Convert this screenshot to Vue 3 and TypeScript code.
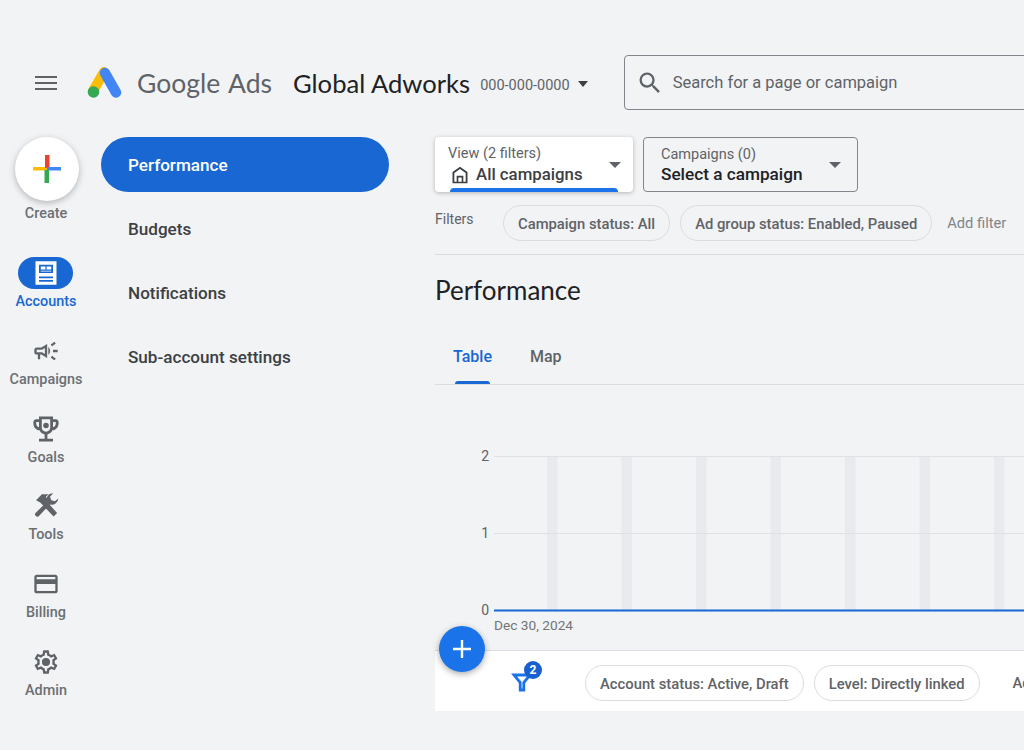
<script setup lang="ts">
const railItems = [
  { label: 'Campaigns', box: '0 0 24 24', icon: 'M18 11v2h4v-2h-4zm-2 6.61c.96.71 2.21 1.65 3.2 2.39.4-.53.8-1.07 1.2-1.6-.99-.74-2.24-1.68-3.2-2.4-.4.54-.8 1.08-1.2 1.61zM20.4 5.6c-.4-.53-.8-1.07-1.2-1.6-.99.74-2.24 1.68-3.2 2.4.4.53.8 1.07 1.2 1.6.96-.72 2.21-1.65 3.2-2.4zM4 9c-1.1 0-2 .9-2 2v2c0 1.1.9 2 2 2h1v4h2v-4h1l5 3V6L8 9H4zm5.03 1.71L11 9.53v4.94l-1.97-1.18-.48-.29H4v-2h4.550l.48-.29zM15.500 12c0-1.330-.58-2.530-1.500-3.350v6.690c.92-.81 1.500-2.010 1.500-3.340z' },
  { label: 'Goals', box: '2 2 20 20', icon: 'M19 5h-2V3H7v2H5c-1.1 0-2 .9-2 2v1c0 2.55 1.92 4.63 4.39 4.94.63 1.5 1.98 2.63 3.61 2.96V19H7v2h10v-2h-4v-3.1c1.63-.33 2.98-1.46 3.61-2.96C19.08 12.63 21 10.55 21 8V7c0-1.1-.9-2-2-2zM5 8V7h2v3.82C5.84 10.4 5 9.3 5 8zm10 3c0 1.65-1.35 3-3 3s-3-1.35-3-3V5h6v6zm4-3c0 1.3-.84 2.4-2 2.82V7h2v1zM12 7.5a2 2 0 1 0 0 4 2 2 0 0 0 0-4z' },
  { label: 'Tools', box: '0 0 24 24', icon: 'M3.500 7 8.500 2H14l-2.200 2.200L14 6.500 12.500 8 21.500 18l-3 3L8.500 10.500 7 9zM22.500 5.500a5.500 5.500 0 0 1-7.200 5.200L6 20.500a1.900 1.900 0 0 1-2.800-2.700l9.700-9.400A5.500 5.500 0 0 1 18.200 1L15.400 4l1.200 3 3 1z' },
  { label: 'Billing', box: '0 0 24 24', icon: 'M20 4H4c-1.11 0-1.99.89-1.99 2L2 18c0 1.11.89 2 2 2h16c1.11 0 2-.89 2-2V6c0-1.11-.89-2-2-2zm0 14H4v-6h16v6zm0-10H4V6h16v2z' },
  { label: 'Admin', box: '0 0 24 24', icon: 'M19.43 12.98c.04-.32.07-.64.07-.98s-.03-.66-.07-.98l2.11-1.65c.19-.15.24-.42.12-.64l-2-3.46c-.12-.22-.39-.3-.61-.22l-2.49 1c-.52-.4-1.08-.73-1.69-.98l-.38-2.65C14.46 2.18 14.25 2 14 2h-4c-.25 0-.46.18-.49.42l-.38 2.65c-.61.25-1.17.59-1.69.98l-2.49-1c-.23-.09-.49 0-.61.22l-2 3.46c-.13.22-.07.49.12.64l2.11 1.65c-.04.32-.07.65-.07.98s.03.66.07.98l-2.11 1.65c-.19.15-.24.42-.12.64l2 3.46c.12.22.39.3.61.22l2.49-1c.52.4 1.08.73 1.69.98l.38 2.65c.03.24.24.42.49.42h4c.25 0 .46-.18.49-.42l.38-2.65c.61-.25 1.17-.59 1.69-.98l2.49 1c.23.09.49 0 .61-.22l2-3.46c.12-.22.07-.49-.12-.64l-2.11-1.65zM17.45 11.27c.04.31.05.52.05.73s-.02.43-.05.73l-.14 1.13.89.7 1.08.84-.7 1.21-1.27-.51-1.04-.42-.9.68c-.43.32-.84.56-1.25.73l-1.06.43-.16 1.13-.2 1.35h-1.4l-.19-1.35-.16-1.13-1.06-.43c-.43-.18-.83-.41-1.23-.71l-.91-.7-1.06.43-1.27.51-.7-1.21 1.08-.84.89-.7-.14-1.13c-.03-.31-.05-.54-.05-.74s.02-.43.05-.73l.14-1.13-.89-.7-1.08-.84.7-1.21 1.27.51 1.04.42.9-.68c.43-.32.84-.56 1.25-.73l1.06-.43.16-1.13.2-1.35h1.39l.19 1.35.16 1.13 1.06.43c.43.18.83.41 1.23.71l.91.7 1.06-.43 1.27-.51.7 1.21-1.07.85-.89.7.14 1.13zM12 8.5a3.5 3.5 0 1 0 0 7 3.5 3.5 0 0 0 0-7z' },
]
const navItems = ['Budgets', 'Notifications', 'Sub-account settings']
const bars = Array.from({ length: 8 }, (_, i) => 112 + i * 74.5)
const gridLines = [
  { y: 72, label: '2' },
  { y: 149, label: '1' },
  { y: 226, label: '0' },
]
</script>

<template>
  <div class="page">
    <header class="topbar">
      <svg class="menu" width="24" height="24" viewBox="0 0 24 24" aria-hidden="true"><path fill="#5f6368" d="M1 5h22v2.100H1zM1 11h22v2.100H1zM1 17h22v2.100H1z" /></svg>
      <svg class="logo" width="36" height="32" viewBox="0 0 36 32" aria-hidden="true">
        <path d="M17 5 6 24" stroke="#fbbc04" stroke-width="10" stroke-linecap="round" fill="none" />
        <path d="M18 6 29 25.500" stroke="#4285f4" stroke-width="10.500" stroke-linecap="round" fill="none" />
        <circle cx="6.500" cy="25" r="5.800" fill="#34a853" />
      </svg>
      <span class="brand"><span>Google</span> <span class="brand-a">Ads</span></span>
      <span class="account">Global Adworks</span>
      <span class="cid">000-000-0000</span>
      <i class="caret small"></i>
      <div class="search">
        <svg width="28" height="28" viewBox="0 0 24 24" aria-hidden="true"><path fill="#5f6368" d="M15.500 14h-.79l-.28-.27A6.470 6.470 0 0 0 16 9.500 6.500 6.500 0 1 0 9.500 16c1.610 0 3.090-.59 4.230-1.570l.27.28v.79l5 4.990L20.490 19l-4.990-5zm-6 0C7.010 14 5 11.990 5 9.500S7.010 5 9.500 5 14 7.010 14 9.500 11.990 14 9.500 14z" /></svg>
        <span>Search for a page or campaign</span>
      </div>
    </header>

    <div class="body">
      <aside class="rail">
        <div class="create-item">
          <div class="create-btn">
            <svg width="28" height="28" viewBox="0 0 28 28" aria-hidden="true">
              <path d="M0 12h14v3.500H0z" fill="#fbbc04" />
              <path d="M12 0h4.500v13H12z" fill="#ea4335" />
              <path d="M14 12h14v3.500H14z" fill="#4285f4" />
              <path d="M11.500 15h4.500v13h-4.500z" fill="#34a853" />
            </svg>
          </div>
          <span class="rail-label">Create</span>
        </div>
        <div class="rail-item accounts">
          <div class="pill">
            <svg width="28" height="28" viewBox="0 0 24 24" aria-hidden="true"><path fill="#fff" fill-rule="evenodd" d="M3 2h18v20H3zM6 5v7h12V5zM6 15v1.500h12V15zM6 18v1.500h12V18zM7.500 6.500h4V9h-4zM12.500 6.500h4V9h-4zM7.500 10h9v.8h-9z" /></svg>
          </div>
          <span class="rail-label">Accounts</span>
        </div>
        <div v-for="item in railItems" :key="item.label" class="rail-item">
          <svg width="28" height="28" :viewBox="item.box" aria-hidden="true"><path fill="#5f6368" :d="item.icon" /></svg>
          <span class="rail-label">{{ item.label }}</span>
        </div>
      </aside>

      <nav class="nav">
        <div class="nav-item active">Performance</div>
        <div v-for="item in navItems" :key="item" class="nav-item">{{ item }}</div>
      </nav>

      <main class="main">
        <div class="selectors">
          <div class="selector view">
            <div class="sel-text">
              <span class="sel-label">View (2 filters)</span>
              <span class="sel-value">
                <svg width="20" height="20" viewBox="0 0 24 24" aria-hidden="true"><path fill="#3c4043" fill-rule="evenodd" d="M12 2 3 8.500V22h18V8.500zM5.200 9.700 12 4.800l6.800 4.900V20H16v-7H8v7H5.200zM10 15h4v5h-4z" /></svg>
                All campaigns
              </span>
            </div>
            <i class="caret"></i>
            <div class="view-bar"></div>
          </div>
          <div class="selector campaigns">
            <div class="sel-text">
              <span class="sel-label">Campaigns (0)</span>
              <span class="sel-value dark">Select a campaign</span>
            </div>
            <i class="caret"></i>
          </div>
        </div>

        <div class="filters">
          <span class="filters-label">Filters</span>
          <span class="chip">Campaign status: All</span>
          <span class="chip">Ad group status: Enabled, Paused</span>
          <span class="add-filter">Add filter</span>
        </div>

        <h1 class="title">Performance</h1>

        <div class="tabs">
          <span class="tab active">Table</span>
          <span class="tab">Map</span>
        </div>

        <div class="chart">
          <svg width="589" height="265" viewBox="0 0 589 265" aria-label="Performance chart">
            <rect v-for="x in bars" :key="x" :x="x" y="71" width="10.500" height="154" fill="#e8eaed" />
            <line v-for="g in gridLines.slice(0, 2)" :key="g.y" x1="59" x2="589" :y1="g.y - 0.5" :y2="g.y - 0.5" stroke="#dfe1e5" />
            <text v-for="g in gridLines" :key="g.label" x="54" :y="g.y + 4" text-anchor="end" class="axis">{{ g.label }}</text>
            <line x1="59" x2="589" y1="225.500" y2="225.500" stroke="#1967d2" stroke-width="2" />
            <text x="59" y="245" class="axis date">Dec 30, 2024</text>
          </svg>
        </div>

        <div class="panel">
          <div class="fab">
            <svg width="24" height="24" viewBox="0 0 24 24" aria-hidden="true"><path fill="#fff" d="M10.800 3h2.400v7.800H21v2.400h-7.800V21h-2.400v-7.800H3v-2.400h7.800z" /></svg>
          </div>
          <div class="funnel">
            <svg width="22" height="22" viewBox="0 0 22 22" aria-hidden="true"><path fill="none" stroke="#1a73e8" stroke-width="2.800" d="M3 5h16l-6.200 7.500V20H9.200v-7.500z" /></svg>
            <span class="badge">2</span>
          </div>
          <span class="chip">Account status: Active, Draft</span>
          <span class="chip">Level: Directly linked</span>
          <span class="more">Add filter</span>
        </div>
      </main>
    </div>
  </div>
</template>

<style>
html, body { margin: 0; background: #f1f3f5; overflow: hidden; }
</style>

<style scoped>
.page {
  width: 1024px;
  height: 750px;
  overflow: hidden;
  box-sizing: border-box;
  padding-top: 55px;
  background: #f1f3f5;
  font-family: Roboto, "Liberation Sans", sans-serif;
  color: #3c4043;
}
.topbar {
  display: flex;
  align-items: center;
  height: 55px;
  padding-left: 34px;
  white-space: nowrap;
}
.menu { flex: none; }
.logo { margin-left: 29px; flex: none; }
.brand {
  margin-left: 14px;
  font-family: Lato, sans-serif;
  font-size: 26.500px;
  color: #5f6368;
  width: 156px;
  flex: none;
}
.brand-a { margin-left: 1px; }
.account {
  font-family: Lato, sans-serif;
  font-size: 25.600px;
  color: #202124;
}
.cid { margin-left: 10px; margin-top: 6px; font-size: 14.500px; color: #5f6368; }
.caret {
  display: block;
  flex: none;
  width: 0;
  height: 0;
  border-left: 6px solid transparent;
  border-right: 6px solid transparent;
  border-top: 6px solid #5f6368;
}
.caret.small { margin-left: 8px; margin-top: 3px; border-left-width: 5.500px; border-right-width: 5.500px; border-top-color: #3c4043; }
.search {
  display: flex;
  align-items: center;
  gap: 9px;
  flex: none;
  box-sizing: border-box;
  margin-left: 36px;
  width: 500px;
  height: 55px;
  padding-left: 11px;
  border: 1px solid #80868b;
  border-radius: 4px;
  font-size: 16.500px;
  color: #5f6368;
}

.body {
  display: grid;
  grid-template-columns: 92px 343px 589px;
  margin-top: 27px;
}

.rail { display: flex; flex-direction: column; align-items: center; }
.rail-label { font-size: 14.400px; font-weight: 500; color: #6b6f74; line-height: 18px; }
.create-item { display: flex; flex-direction: column; align-items: center; gap: 4px; margin-bottom: 34px; }
.create-btn {
  width: 64px;
  height: 64px;
  margin-left: 2px;
  border-radius: 50%;
  background: #fff;
  box-shadow: 0 2px 6px rgba(60, 64, 67, 0.35);
  display: flex;
  align-items: center;
  justify-content: center;
}
.rail-item {
  display: flex;
  flex-direction: column;
  align-items: center;
  height: 77.700px;
  box-sizing: border-box;
}
.rail-item > svg { margin-bottom: 6px; }
.accounts { height: 80px; }
.accounts .rail-label { color: #1967d2; }
.pill {
  width: 55px;
  height: 32px;
  border-radius: 16px;
  background: #1967d2;
  display: flex;
  align-items: center;
  justify-content: center;
  margin-bottom: 4px;
}

.nav { padding-left: 9px; display: flex; flex-direction: column; gap: 9px; }
.nav-item {
  width: 288px;
  height: 55px;
  box-sizing: border-box;
  padding: 1px 0 0 27px;
  display: flex;
  align-items: center;
  font-size: 17.100px;
  font-weight: 500;
  color: #3c4043;
  border-radius: 28px;
}
.nav-item.active { background: #1967d2; color: #fff; }

.main { min-width: 0; }
.selectors { display: flex; gap: 10px; height: 55px; }
.selector {
  position: relative;
  box-sizing: border-box;
  height: 55px;
  display: flex;
  align-items: center;
  justify-content: space-between;
  border-radius: 4px;
  overflow: hidden;
}
.selector.view { width: 198px; background: #fff; box-shadow: 0 1px 4px rgba(60, 64, 67, 0.35); padding: 0 12px 0 13px; }
.selector.campaigns { width: 215px; border: 1px solid #80868b; padding: 0 16px 0 17px; }
.sel-text { display: flex; flex-direction: column; }
.sel-label { font-size: 14.500px; line-height: 20px; color: #5f6368; }
.sel-value { display: flex; align-items: center; gap: 6px; font-size: 16.800px; font-weight: 500; line-height: 21px; color: #3c4043; white-space: nowrap; }
.sel-value svg { margin-left: 2px; }
.sel-value.dark { color: #202124; font-size: 17.200px; margin-top: -1px; }
.campaigns .sel-label { margin-top: 1px; }
.view-bar {
  position: absolute;
  left: 15px;
  bottom: 0;
  width: 168px;
  height: 4px;
  border-radius: 4px 4px 0 0;
  background: #1a73e8;
}
.filters {
  display: flex;
  align-items: center;
  box-sizing: border-box;
  margin-top: 13px;
  border-bottom: 1px solid #dadce0;
  height: 50px;
  padding-bottom: 13px;
  white-space: nowrap;
}
.filters-label { font-size: 14px; color: #5f6368; width: 68px; flex: none; margin-top: -8px; }
.chip {
  flex: none;
  box-sizing: border-box;
  height: 36px;
  padding: 1px 14px 0;
  display: inline-flex;
  align-items: center;
  border: 1px solid #dadce0;
  border-radius: 18px;
  font-size: 14.800px;
  font-weight: 500;
  color: #5f6368;
}
.filters .chip + .chip { margin-left: 10px; }
.add-filter { margin-left: 15px; font-size: 14.700px; color: #80868b; }
.title {
  margin: 0;
  box-sizing: border-box;
  height: 73px;
  padding-bottom: 3px;
  display: flex;
  align-items: center;
  font-family: Lato, sans-serif;
  font-size: 26px;
  font-weight: 400;
  color: #202124;
}
.tabs {
  display: flex;
  height: 56px;
  border-bottom: 1px solid #dadce0;
}
.tab {
  position: relative;
  box-sizing: border-box;
  height: 56px;
  padding: 0 18px;
  display: flex;
  align-items: center;
  font-size: 16px;
  font-weight: 500;
  color: #5f6368;
}
.tab + .tab { padding: 0 20px; }
.tab.active { color: #1967d2; }
.tab.active::after {
  content: "";
  position: absolute;
  left: 20px;
  right: 20px;
  bottom: 0;
  height: 3px;
  border-radius: 3px 3px 0 0;
  background: #1967d2;
}
.chart { height: 265px; }
.chart svg { display: block; }
.axis { font-family: Roboto, sans-serif; font-size: 14px; fill: #5f6368; }
.date { font-size: 13.700px; fill: #757575; }
.panel {
  position: relative;
  height: 61px;
  padding-top: 4px;
  background: #fff;
  border-top: 1px solid #dadce0;
  box-sizing: border-box;
  display: flex;
  align-items: center;
  white-space: nowrap;
}
.panel .chip + .chip { margin-left: 10px; }
.more { margin-left: 33px; font-size: 14.800px; font-weight: 500; color: #5f6368; }
.fab {
  position: absolute;
  left: 4px;
  top: -25px;
  width: 46px;
  height: 46px;
  border-radius: 50%;
  background: #1a73e8;
  box-shadow: 0 2px 6px rgba(60, 64, 67, 0.45);
  display: flex;
  align-items: center;
  justify-content: center;
}
.funnel { position: relative; width: 150px; height: 30px; flex: none; }
.funnel svg { position: absolute; left: 76px; top: 2px; }
.badge {
  position: absolute;
  left: 89px;
  top: -7px;
  width: 18px;
  height: 18px;
  border-radius: 50%;
  background: #1a5fd0;
  color: #fff;
  font-size: 12px;
  font-weight: 700;
  display: flex;
  align-items: center;
  justify-content: center;
}
</style>
